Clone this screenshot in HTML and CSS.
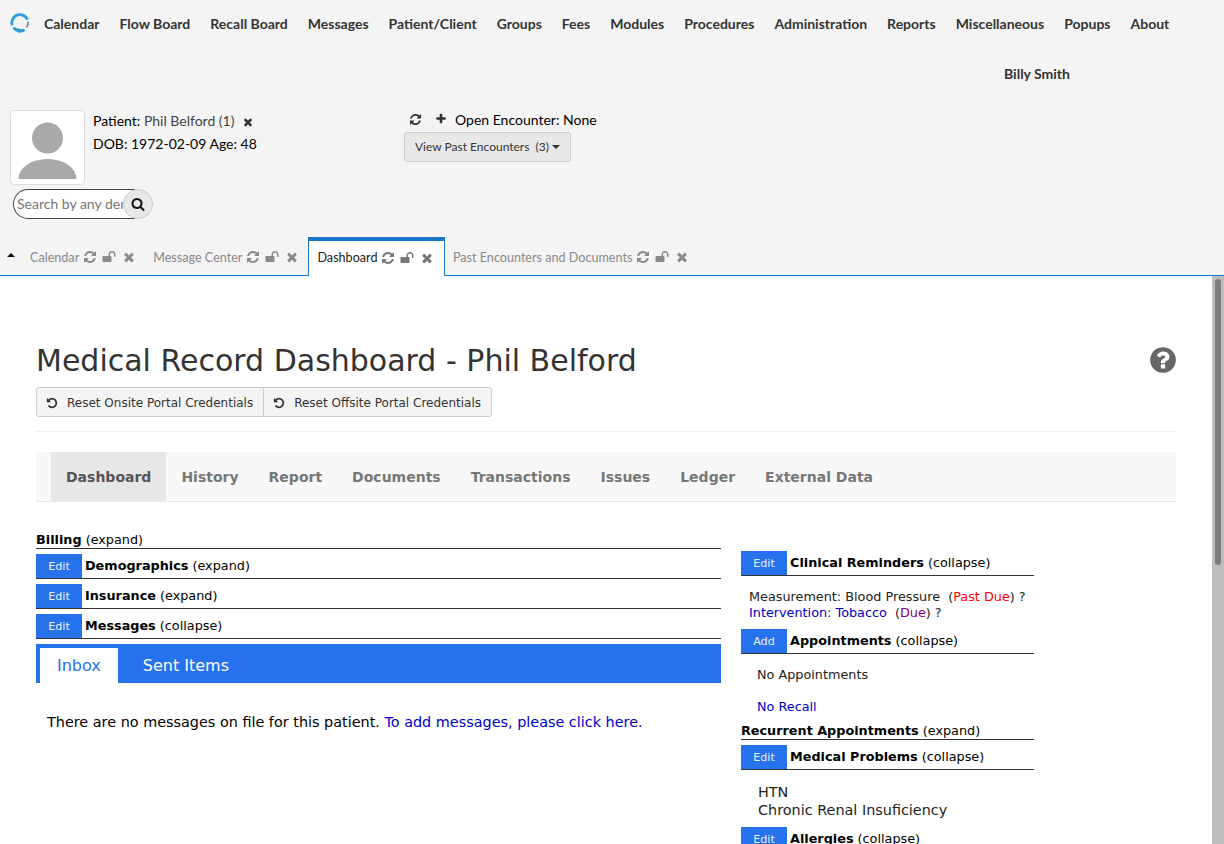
FILE: index.html
```html
<!DOCTYPE html>
<html lang="en">
<head>
<meta charset="utf-8">
<title>Medical Record Dashboard</title>
<link rel="stylesheet" href="styles.css">
</head>
<body>
<svg class="defs" width="0" height="0">
  <symbol id="i-times" viewBox="0 0 1792 1792"><path d="M1490 1322q0 40-28 68l-136 136q-28 28-68 28t-68-28l-294-294-294 294q-28 28-68 28t-68-28l-136-136q-28-28-28-68t28-68l294-294-294-294q-28-28-28-68t28-68l136-136q28-28 68-28t68 28l294 294 294-294q28-28 68-28t68 28l136 136q28 28 28 68t-28 68l-294 294 294 294q28 28 28 68z"/></symbol>
  <symbol id="i-refresh" viewBox="0 0 1792 1792"><path d="M1639 1056q0 5-1 7-64 268-268 434.5t-478 166.5q-146 0-282.5-55t-243.5-157l-129 129q-19 19-45 19t-45-19-19-45v-448q0-26 19-45t45-19h448q26 0 45 19t19 45-19 45l-137 137q71 66 161 102t187 36q134 0 250-65t186-179q11-17 53-117 8-23 30-23h192q13 0 22.5 9.5t9.5 22.5zm25-800v448q0 26-19 45t-45 19h-448q-26 0-45-19t-19-45 19-45l138-138q-148-137-349-137-134 0-250 65t-186 179q-11 17-53 117-8 23-30 23h-199q-13 0-22.5-9.5t-9.5-22.5v-7q65-268 270-434.5t480-166.5q146 0 284 55.5t245 156.5l130-129q19-19 45-19t45 19 19 45z"/></symbol>
  <symbol id="i-unlock" viewBox="0 0 1792 1792"><path d="M1728 576v256q0 26-19 45t-45 19h-64q-26 0-45-19t-19-45v-256q0-106-75-181t-181-75-181 75-75 181v192h96q40 0 68 28t28 68v576q0 40-28 68t-68 28h-960q-40 0-68-28t-28-68v-576q0-40 28-68t68-28h672v-192q0-185 131.5-316.5t316.5-131.5 316.5 131.5 131.5 316.5z"/></symbol>
  <symbol id="i-plus" viewBox="0 0 1792 1792"><path d="M1600 736v192q0 40-28 68t-68 28h-416v416q0 40-28 68t-68 28h-192q-40 0-68-28t-28-68v-416h-416q-40 0-68-28t-28-68v-192q0-40 28-68t68-28h416v-416q0-40 28-68t68-28h192q40 0 68 28t28 68v416h416q40 0 68 28t28 68z"/></symbol>
  <symbol id="i-search" viewBox="0 0 1792 1792"><path d="M1216 832q0-185-131.5-316.5t-316.5-131.5-316.5 131.5-131.5 316.5 131.5 316.5 316.5 131.5 316.5-131.5 131.5-316.5zm512 832q0 52-38 90t-90 38q-54 0-90-38l-343-342q-179 124-399 124-143 0-273.5-55.5t-225-150-150-225-55.5-273.5 55.5-273.5 150-225 225-150 273.5-55.5 273.5 55.5 225 150 150 225 55.5 273.5q0 220-124 399l343 343q37 37 37 90z"/></symbol>
  <symbol id="i-help" viewBox="0 0 1792 1792"><path d="M1024 1376v-192q0-14-9-23t-23-9h-192q-14 0-23 9t-9 23v192q0 14 9 23t23 9h192q14 0 23-9t9-23zm256-672q0-88-55.5-163t-138.5-116-170-41q-243 0-371 213-15 24 8 42l132 100q7 6 19 6 16 0 25-12 53-68 86-92 34-24 86-24 48 0 85.5 26t37.5 59q0 38-20 61t-68 45q-63 28-115.5 86.5t-52.5 125.5v36q0 14 9 23t23 9h192q14 0 23-9t9-23q0-19 21.5-49.5t54.5-49.5q32-18 49-28.5t46-35 44.5-48 28-60.5 12.5-81zm384 192q0 209-103 385.5t-279.5 279.5-385.5 103-385.5-103-279.5-279.5-103-385.5 103-385.5 279.5-279.5 385.5-103 385.5 103 279.5 279.5 103 385.5z"/></symbol>
  <symbol id="i-undo" viewBox="0 0 1792 1792"><path d="M1664 896q0 156-61 298t-164 245-245 164-298 61q-172 0-327-72.5t-264-204.5q-7-10-6.5-22.5t8.5-20.5l137-138q10-9 25-9 16 2 23 12 73 95 179 147t225 52q104 0 198.5-40.5t163.5-109.5 109.5-163.5 40.5-198.5-40.5-198.5-109.5-163.5-163.5-109.5-198.5-40.5q-98 0-188 35.5t-160 101.5l137 138q31 30 14 69-17 40-59 40h-448q-26 0-45-19t-19-45v-448q0-42 40-59 39-17 69 14l130 129q107-101 244.5-156.5t284.5-55.5q156 0 298 61t245 164 164 245 61 298z"/></symbol>
</svg>

<div class="app">
  <header class="top">
    <nav class="menu">
      <svg class="logo" viewBox="0 0 20 20"><path class="logo-a" d="M11.5 1.8A8.2 8.2 0 0 0 2.2 12.4"/><path class="logo-a" d="M11 1.8A8.2 8.2 0 0 1 17.6 6.6"/><path class="logo-b" d="M3.5 14.5A8 8 0 0 0 14.5 16.8"/><path class="logo-c" d="M18.2 8.5A8.2 8.2 0 0 1 16.5 14.5"/><path class="logo-tip" d="M8 20l-1.5-5 6 1.5z"/></svg>
      <a>Calendar</a><a>Flow Board</a><a>Recall Board</a><a>Messages</a><a>Patient/Client</a><a>Groups</a><a>Fees</a><a>Modules</a><a>Procedures</a><a>Administration</a><a>Reports</a><a>Miscellaneous</a><a>Popups</a><a>About</a>
    </nav>
    <div class="user">Billy Smith</div>
    <div class="patient-row">
      <div class="patient-col">
        <div class="patient-main">
          <div class="photo">
            <svg viewBox="0 0 73 73" width="73" height="73"><circle cx="36.5" cy="27" r="15.5" fill="#a9a9a9"/><path d="M7.5 68a29 20 0 0 1 58 0z" fill="#a9a9a9"/></svg>
          </div>
          <div class="patient-info">
            <div class="pline">Patient: <span class="pname">Phil Belford (1)</span><svg class="ico ico-x"><use href="#i-times"/></svg></div>
            <div class="pline">DOB: 1972-02-09 Age: 48</div>
          </div>
        </div>
        <div class="search">
          <span class="search-input">Search by any demographics</span>
          <span class="search-btn"><svg class="ico ico-s"><use href="#i-search"/></svg></span>
        </div>
      </div>
      <div class="encounter">
        <div class="enc-line"><svg class="ico ico-r"><use href="#i-refresh"/></svg><svg class="ico ico-p"><use href="#i-plus"/></svg><span>Open Encounter: None</span></div>
        <button class="past">View Past Encounters&nbsp; (3)<i class="caret"></i></button>
      </div>
    </div>
    <div class="tabs">
      <i class="up"></i>
      <div class="tab"><span>Calendar</span><svg class="t-r"><use href="#i-refresh"/></svg><svg class="t-l"><use href="#i-unlock"/></svg><svg class="t-x"><use href="#i-times"/></svg></div>
      <div class="tab"><span>Message Center</span><svg class="t-r"><use href="#i-refresh"/></svg><svg class="t-l"><use href="#i-unlock"/></svg><svg class="t-x"><use href="#i-times"/></svg></div>
      <div class="tab tab-on"><span>Dashboard</span><svg class="t-r"><use href="#i-refresh"/></svg><svg class="t-l"><use href="#i-unlock"/></svg><svg class="t-x"><use href="#i-times"/></svg></div>
      <div class="tab"><span>Past Encounters and Documents</span><svg class="t-r"><use href="#i-refresh"/></svg><svg class="t-l"><use href="#i-unlock"/></svg><svg class="t-x"><use href="#i-times"/></svg></div>
    </div>
  </header>

  <div class="frame">
    <main class="page">
      <div class="title-row">
        <h1>Medical Record Dashboard - Phil Belford</h1>
        <svg class="help"><use href="#i-help"/></svg>
      </div>
      <div class="btn-group">
        <button class="btn"><svg class="ico-u"><use href="#i-undo"/></svg>Reset Onsite Portal Credentials</button>
        <button class="btn"><svg class="ico-u"><use href="#i-undo"/></svg>Reset Offsite Portal Credentials</button>
      </div>
      <hr class="rule">
      <nav class="subnav">
        <a class="active">Dashboard</a><a>History</a><a>Report</a><a>Documents</a><a>Transactions</a><a>Issues</a><a>Ledger</a><a>External Data</a>
      </nav>
      <div class="cols">
        <section class="left">
          <div class="sec sec-plain"><span class="sec-t"><b>Billing</b> (expand)</span></div>
          <div class="sec"><span class="edit">Edit</span><span class="sec-t"><b>Demographics</b> (expand)</span></div>
          <div class="sec"><span class="edit">Edit</span><span class="sec-t"><b>Insurance</b> (expand)</span></div>
          <div class="sec"><span class="edit">Edit</span><span class="sec-t"><b>Messages</b> (collapse)</span></div>
          <div class="msgbar"><span class="msgtab on">Inbox</span><span class="msgtab">Sent Items</span></div>
          <p class="nomsg">There are no messages on file for this patient. <a>To add messages, please click here.</a></p>
        </section>
        <section class="right">
          <div class="sec"><span class="edit">Edit</span><span class="sec-t"><b>Clinical Reminders</b> (collapse)</span></div>
          <div class="reminders">
            <div>Measurement: Blood Pressure&nbsp; (<span class="red">Past Due</span>) ?</div>
            <div><a>Intervention: Tobacco</a>&nbsp; (<span class="purple">Due</span>) ?</div>
          </div>
          <div class="sec"><span class="edit">Add</span><span class="sec-t"><b>Appointments</b> (collapse)</span></div>
          <div class="appts">
            <div>No Appointments</div>
            <a class="recall">No Recall</a>
          </div>
          <div class="sec sec-plain"><span class="sec-t"><b>Recurrent Appointments</b> (expand)</span></div>
          <div class="sec"><span class="edit">Edit</span><span class="sec-t"><b>Medical Problems</b> (collapse)</span></div>
          <div class="problems">
            <div>HTN</div>
            <div>Chronic Renal Insuficiency</div>
          </div>
          <div class="sec"><span class="edit">Edit</span><span class="sec-t"><b>Allergies</b> (collapse)</span></div>
        </section>
      </div>
    </main>
    <div class="scrollbar"><div class="thumb"></div></div>
  </div>
</div>
</body>
</html>
```
FILE: styles.css
```css
* { box-sizing: border-box; }
html, body { margin: 0; height: 844px; overflow: hidden; }
body { font-family: "DejaVu Sans", sans-serif; background: #fff; color: #000; }
.defs { position: absolute; }
svg { display: block; fill: currentColor; flex: none; }

.app { height: 844px; display: flex; flex-direction: column; }
.top { background: #f4f4f4; font-family: Lato, sans-serif; font-size: 14px; color: #000; height: 276px; flex: none; }

.menu { display: flex; align-items: center; height: 46px; padding: 1px 0 0 10px; gap: 20px; }
.menu a { font-weight: 700; color: #333; font-size: 14px; }
.logo { width: 20px; height: 20px; margin: -2px -6px 0 0; fill: none; stroke-width: 2.8; }
.logo-a { stroke: #2a9fdc; }
.logo-b { stroke: #2a9fdc; }
.logo-c { stroke: #44627c; stroke-width: 1.2; }
.logo-tip { fill: #2a9fdc; stroke: none; }
.user { font-weight: 700; color: #333; margin: 19px 0 0 1004px; line-height: 18px; height: 18px; }

.patient-row { display: flex; margin-top: 27px; padding-left: 10px; }
.patient-col { width: 394px; }
.patient-main { display: flex; }
.photo { width: 75px; height: 75px; background: #fff; border: 1px solid #ddd; border-radius: 4px; }
.patient-info { margin: -1px 0 0 8px; }
.pline { display: flex; align-items: center; height: 23px; white-space: pre; margin-top: 0; }
.pname { color: #444; }
.ico { color: #333; }
.ico-x { width: 12px; height: 12px; margin-left: 8px; margin-top: 2px; }
.search { display: flex; margin: 4px 0 0 3px; height: 30px; align-items: center; }
.search-input { width: 122px; height: 30px; border: 1px solid #444; border-right: 0; border-radius: 15px 0 0 15px; background: #fff; color: #757575; line-height: 28px; padding-left: 3px; overflow: hidden; white-space: nowrap; }
.search-btn { width: 30px; height: 30px; margin-left: -12px; border-radius: 50%; background: #e8e8e8; border: 1px solid #ccc; display: flex; align-items: center; justify-content: center; position: relative; }
.ico-s { width: 14px; height: 14px; color: #111; }

.enc-line { display: flex; align-items: center; height: 18px; margin-bottom: 4px; }
.ico-r { width: 13px; height: 13px; margin-left: 4.5px; }
.ico-p { width: 12px; height: 12px; margin-left: 13px; }
.enc-line span { margin-left: 8.5px; }
.past { display: flex; align-items: center; height: 30px; width: 167px; padding: 0 0 2px 10px; font: 12px Lato, sans-serif; color: #333; background: #e8e8e8; border: 1px solid #ccc; border-radius: 3px; }
.caret { border-top: 4px solid #333; border-left: 4px solid transparent; border-right: 4px solid transparent; margin: 2px 0 0 3px; }

.tabs { display: flex; align-items: stretch; height: 39px; margin-top: 18px; border-bottom: 1px solid #1976c8; color: #8a8a8a; }
.up { align-self: center; margin: 0 7px 2px 7px; border-bottom: 4px solid #111; border-left: 4px solid transparent; border-right: 4px solid transparent; }
.tab { display: flex; align-items: center; padding: 2px 9.5px 0 8px; }
.tab span { font-size: 12.6px; }
.tab svg { color: #8a8a8a; width: 14px; height: 14px; }
.tab .t-r { margin-left: 4px; }
.tab .t-l { margin-left: 4.5px; }
.tab .t-x { margin-left: 6px; }
.tab-on { background: #fff; color: #222; border: 1px solid #1976c8; border-top: 4px solid #1976c8; border-bottom: 0; height: 39px; padding: 0 10px 2px 8px; }
.tab-on svg { color: #777; }

.frame { flex: 1; display: flex; min-height: 0; }
.page { flex: 1; min-width: 0; padding: 0 36px; overflow: hidden; color: #000; }
.scrollbar { width: 12px; background: #bdbdbd; padding: 3px; flex: none; }
.thumb { height: 286px; background: #7d7d7d; border-radius: 3px; }

.title-row { display: flex; justify-content: space-between; align-items: center; margin-top: 68px; height: 34px; }
h1 { margin: 0; font-size: 30px; font-weight: 400; line-height: 34px; color: #333; }
.help { width: 30px; height: 30px; color: #666; margin: -2px -2px 0 0; }
.btn-group { display: flex; margin-top: 9px; }
.btn { display: flex; align-items: center; height: 30px; padding: 1px 10px 0 9px; font: 12px "DejaVu Sans", sans-serif; color: #333; background: #f4f4f4; border: 1px solid #ccc; }
.btn:first-child { border-radius: 3px 0 0 3px; }
.btn:last-child { border-radius: 0 3px 3px 0; margin-left: -1px; }
.ico-u { width: 12px; height: 12px; margin-right: 9px; color: #333; }
.rule { border: 0; border-top: 1px solid #eee; margin: 14px 0 20px; }

.subnav { display: flex; height: 50px; padding-left: 15px; background: #f8f8f8; border-bottom: 1px solid #e7e7e7; }
.subnav a { display: flex; align-items: center; padding: 0 15px; font-size: 14px; font-weight: 700; color: #777; }
.subnav a.active { background: #e7e7e7; color: #555; }

.cols { display: flex; margin-top: 30px; align-items: flex-start; }
.left { width: 685px; }
.right { width: 293px; margin-left: 20px; padding-top: 19px; }

.sec { display: flex; align-items: center; height: 25px; margin-top: 5px; border-bottom: 1px solid #333; font-size: 12.8px; }
.sec-t { padding-bottom: 2px; }
.sec-plain { height: 17px; margin-top: 0; line-height: 16px; }
.sec-plain .sec-t { padding-bottom: 0; }
.right .sec:first-child { margin-top: 0; }
.right .sec-plain { margin-top: 0; }
.edit { display: flex; align-items: center; justify-content: center; width: 46px; height: 24px; background: #2672ec; color: #eaf0ff; font-size: 11.2px; margin-right: 3px; }

.msgbar { display: flex; height: 39px; margin-top: 5px; background: #2672ec; padding: 4px 0 0 4px; font-size: 16px; color: #fff; }
.msgtab { display: flex; align-items: center; padding: 0 17px; margin-right: 8px; }
.msgtab.on { background: #fff; color: #2672ec; }
.nomsg { font-size: 14.4px; margin: 29px 0 0 11px; line-height: 20px; }
a { color: inherit; }
.nomsg a, .reminders a, .recall { color: #0000cc; }

.reminders { font-size: 12.8px; line-height: 16px; padding: 13px 0 0 8px; color: #222; height: 48px; }
.red { color: #f00; }
.purple { color: #800080; }
.appts { font-size: 12.8px; color: #222; padding: 13px 0 0 16px; height: 69px; }
.appts .recall { display: block; margin-top: 16px; line-height: 16px; }
.appts div { line-height: 16px; }
.problems { font-size: 14.4px; line-height: 18px; padding: 13px 0 0 17px; color: #222; height: 52px; }
```
